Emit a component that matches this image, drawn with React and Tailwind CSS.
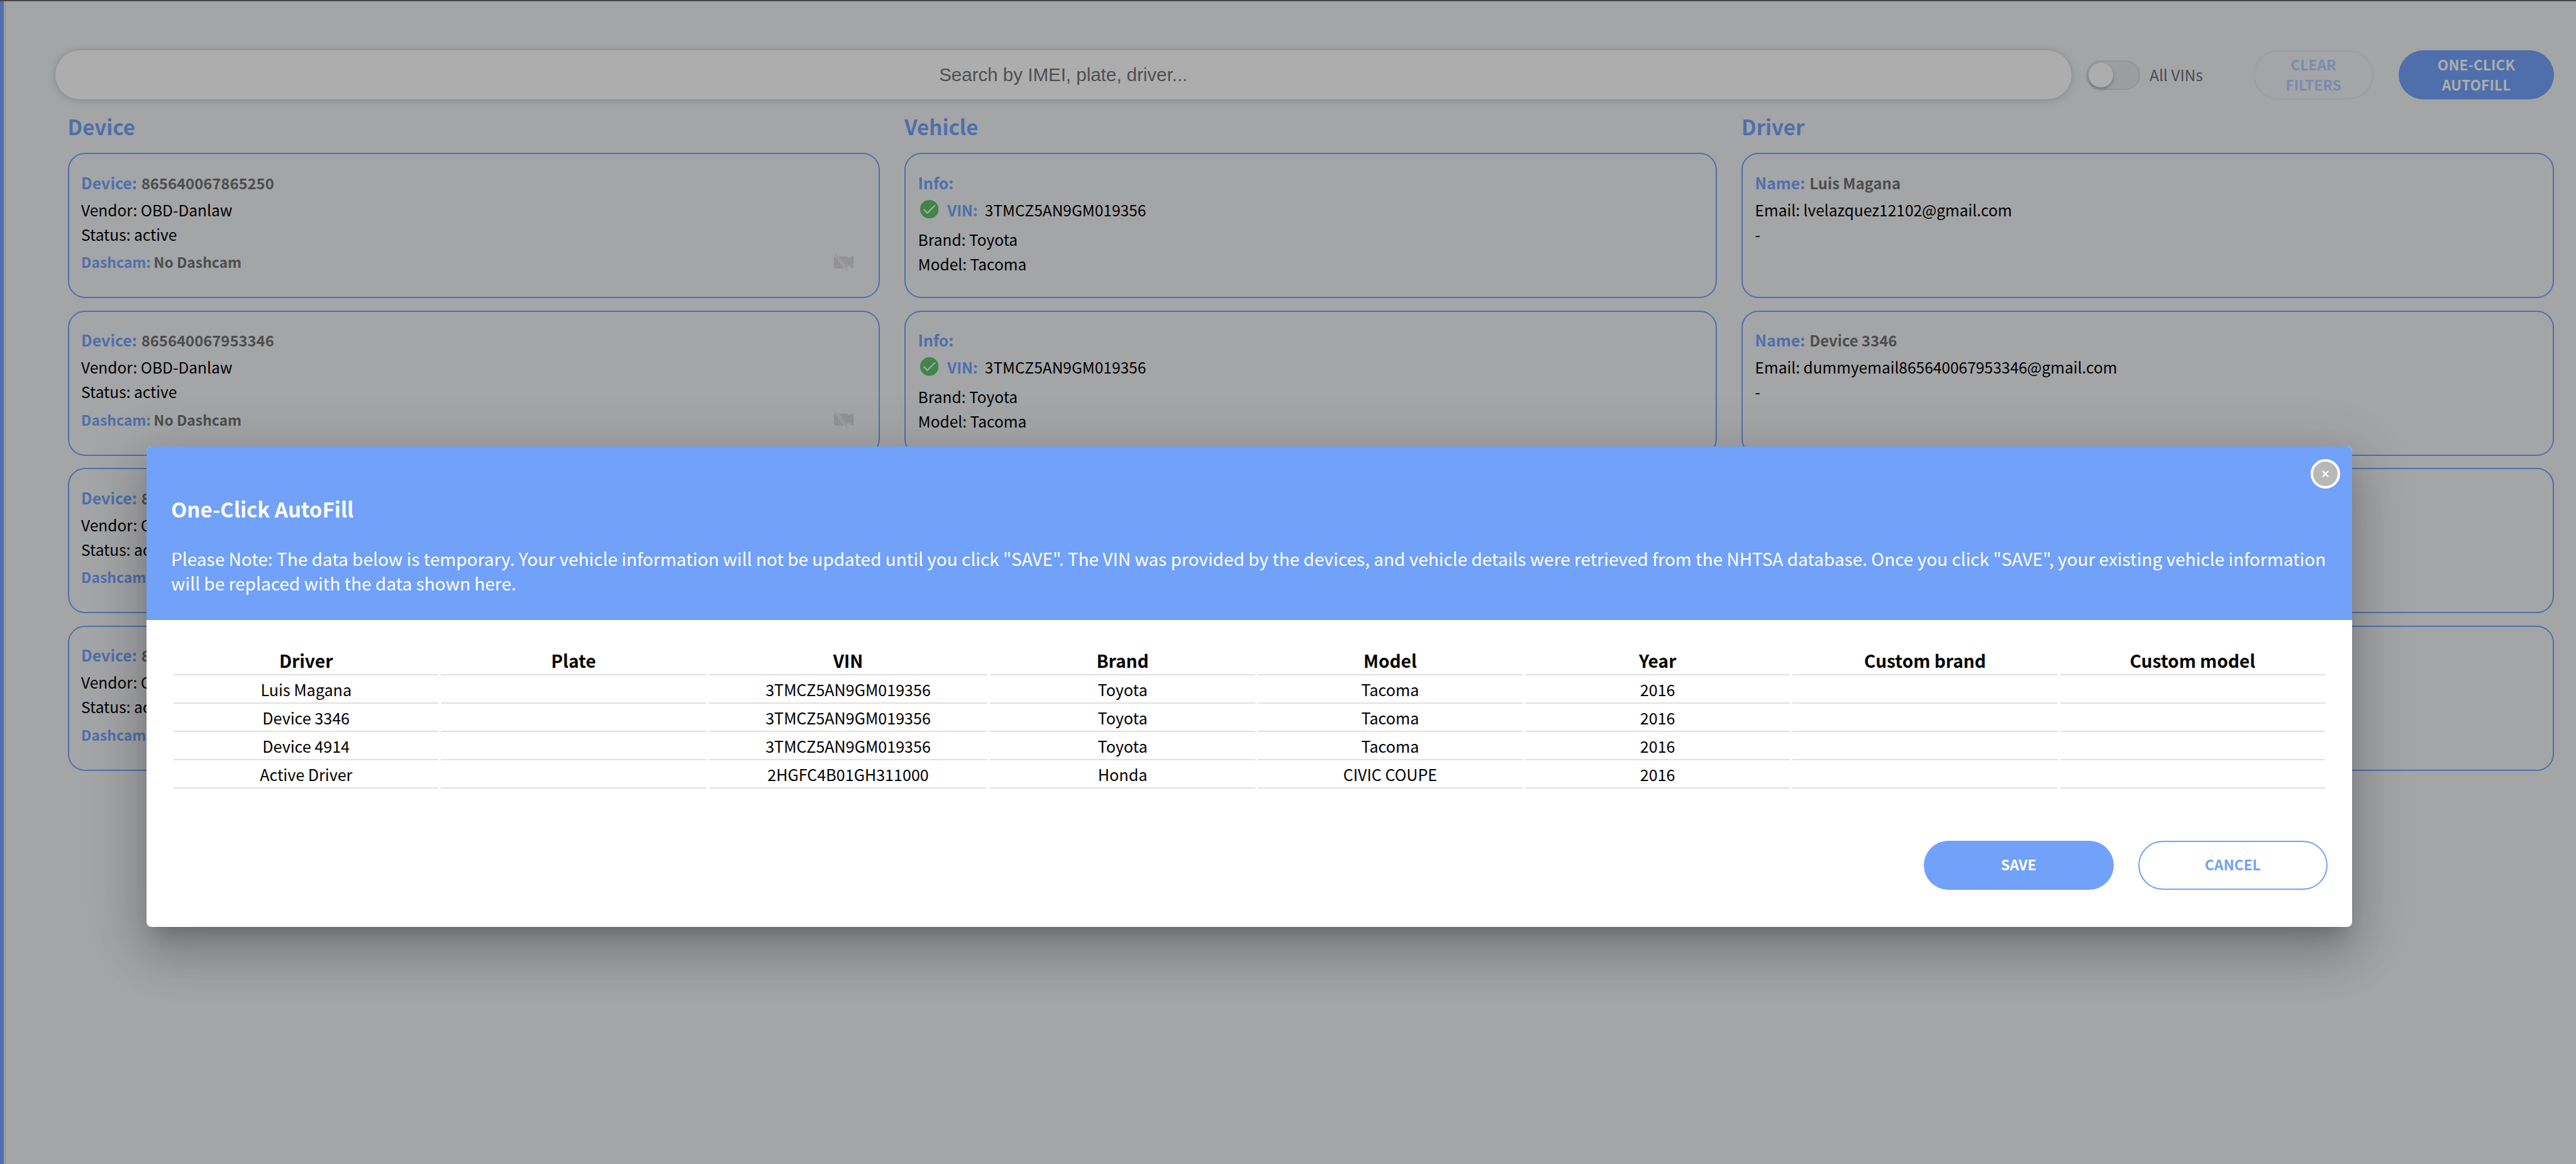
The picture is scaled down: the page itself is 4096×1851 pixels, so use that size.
import React from "react";

const devices = [
  { imei: "865640067865250", name: "Luis Magana", email: "lvelazquez12102@gmail.com" },
  { imei: "865640067953346", name: "Device 3346", email: "dummyemail865640067953346@gmail.com" },
  { imei: "865640067954914", name: "Device 4914", email: "dummyemail865640067954914@gmail.com" },
  { imei: "865640067951234", name: "Active Driver", email: "activedriver@gmail.com" },
];

const columns = ["Driver", "Plate", "VIN", "Brand", "Model", "Year", "Custom brand", "Custom model"];

const rows = [
  ["Luis Magana", "", "3TMCZ5AN9GM019356", "Toyota", "Tacoma", "2016", "", ""],
  ["Device 3346", "", "3TMCZ5AN9GM019356", "Toyota", "Tacoma", "2016", "", ""],
  ["Device 4914", "", "3TMCZ5AN9GM019356", "Toyota", "Tacoma", "2016", "", ""],
  ["Active Driver", "", "2HGFC4B01GH311000", "Honda", "CIVIC COUPE", "2016", "", ""],
];

function CameraOff() {
  return (
    <svg className="h-[28.5px] w-[32px]" viewBox="0 0 33 29" fill="none">
      <path
        d="M3 4.5H20.5c1.3 0 2.2.8 2.7 1.900l.5.9 5.700-2.500c1.500-.7 2.900-.2 2.900 1.200v17c0 1.300-1.200 1.700-2.600 1L25 20.500l-2.300-1.300-.6 2.600c-.4 1.700-1.300 2.700-3 2.700H3A3 3 0 0 1 0 21.500V7.500a3 3 0 0 1 3-3Z"
        fill="#939394"
      />
      <path d="M2.200 1 22.200 28" stroke="#a4a5a7" strokeWidth="4.600" />
      <path d="M2.200 1 22.200 28" stroke="#979798" strokeWidth="2" strokeLinecap="round" />
    </svg>
  );
}

function CheckBadge() {
  return (
    <svg className="h-[29.5px] w-[29.5px]" viewBox="0 0 30 30" fill="none">
      <circle cx="15" cy="15" r="15" fill="#418549" />
      <path d="m5.700 15.200 6 5.900L24.400 8.400" stroke="#a9aba9" strokeWidth="2.300" />
    </svg>
  );
}

function Card({ children }) {
  return (
    <div className="flex h-[231px] flex-col rounded-[27px] border-2 border-[#4e6fab] pt-[25.3px] pl-[19.5px] text-[24.5px] leading-[39.1px]">
      {children}
    </div>
  );
}

function Label({ children }) {
  return <span className="text-[24.8px] font-bold text-[#4e6fab]">{children}</span>;
}

function Value({ children }) {
  return <span className="text-[23.85px] font-bold text-[#4d4d4d]">{children}</span>;
}

function DeviceCard({ device }) {
  return (
    <Card>
      <div className="flex items-baseline gap-[7px]">
        <Label>Device:</Label>
        <Value>{device.imei}</Value>
      </div>
      <div className="mt-[4px]">Vendor: OBD-Danlaw</div>
      <div>Status: active</div>
      <div className="mt-[5.6px] flex items-center justify-between pr-[39px] text-[22.9px] font-bold">
        <div className="flex gap-[4.5px]">
          <span className="text-[#4e6fab]">Dashcam:</span>
          <span className="text-[#4d4d4d]">No Dashcam</span>
        </div>
        <div className="flex">
          <CameraOff />
        </div>
      </div>
    </Card>
  );
}

function VehicleCard() {
  return (
    <Card>
      <Label>Info:</Label>
      <div className="mt-[4px] flex">
        <div className="flex w-[46.5px] items-center pb-[1px] pl-[3px]">
          <CheckBadge />
        </div>
        <span className="w-[59.5px] text-[24px] font-bold text-[#4e6fab]">VIN:</span>
        <span>3TMCZ5AN9GM019356</span>
      </div>
      <div className="mt-[8px]">Brand: Toyota</div>
      <div>Model: Tacoma</div>
    </Card>
  );
}

function DriverCard({ device }) {
  return (
    <Card>
      <div className="flex items-baseline gap-[7px]">
        <Label>Name:</Label>
        <Value>{device.name}</Value>
      </div>
      <div className="mt-[4px]">Email: {device.email}</div>
      <div>-</div>
    </Card>
  );
}

function Column({ title, children }) {
  return (
    <div className="flex flex-col">
      <h2 className="mb-[18.5px] pt-[1px] text-[33px] leading-[48px] font-bold text-[#4e6fab]">{title}</h2>
      <div className="flex flex-col gap-[19.5px]">{children}</div>
    </div>
  );
}

function Toolbar() {
  return (
    <div className="ml-[78px] flex h-[78.3px] items-center">
      <div className="flex h-full w-[3205.5px] items-center justify-center rounded-full bg-[#adadad] font-['Liberation_Sans',sans-serif] text-[29.5px] text-[#4f4f4f] shadow-[0_2px_16px_rgba(0,0,0,0.13),0_0_6px_rgba(0,0,0,0.1)]">
        Search by IMEI, plate, driver...
      </div>
      <div className="ml-[23.5px] flex h-[47px] w-[86px] items-center rounded-full border-2 border-[#949597] bg-[#9c9d9f] pl-[2px]">
        <div className="size-[39px] rounded-full bg-[#adadad] shadow-[0_3px_5px_rgba(0,0,0,0.25)]" />
      </div>
      <div className="ml-[15px] w-[165px] text-[24.5px] text-[#4a4b55]">All VINs</div>
      <div className="flex h-full w-[191px] items-center justify-center rounded-full border-2 border-[#9d9ea0] text-center text-[22.8px] leading-[32.3px] font-bold text-[#7b8bb0]">
        CLEAR
        <br />
        FILTERS
      </div>
      <div className="ml-[40px] flex h-full w-[247px] items-center justify-center rounded-full bg-[#4e6fab] text-center text-[22.8px] leading-[32.3px] font-bold text-[#adadad]">
        ONE-CLICK
        <br />
        AUTOFILL
      </div>
    </div>
  );
}

function Modal() {
  return (
    <div className="absolute top-[708px] left-[233px] flex h-[763.5px] w-[3507px] flex-col overflow-visible rounded-[8px] bg-white shadow-[0_22px_30px_-14px_rgba(0,0,0,0.2),0_47px_74px_6px_rgba(0,0,0,0.14),0_18px_90px_16px_rgba(0,0,0,0.12)]">
      <div className="h-[276px] rounded-t-[8px] bg-[#71a1f8] px-[39px] pt-[74.5px] text-white">
        <h1 className="text-[32.9px] leading-[48px] font-bold">One-Click AutoFill</h1>
        <p className="mt-[35px] text-[28.03px] leading-[39.1px] whitespace-nowrap">
          Please Note: The data below is temporary. Your vehicle information will not be updated until you click "SAVE".
          The VIN was provided by the devices, and vehicle details were retrieved from the NHTSA database. Once you
          click "SAVE", your existing vehicle information
          <br />
          will be replaced with the data shown here.
        </p>
        <button className="absolute top-[19.5px] right-[19.5px] flex size-[47px] items-center justify-center rounded-full border-4 border-white bg-[#b8b8b8]">
          <svg className="size-[11px]" viewBox="0 0 11 11" stroke="#fff" strokeWidth="2.300" strokeLinecap="round">
            <path d="m1.500 1.500 8 8m0-8-8 8" />
          </svg>
        </button>
      </div>

      <div className="mx-[43px] grid grid-cols-[431fr_431fr_454fr_431fr_431fr_431fr_431fr_431fr] gap-x-[3.9px] pt-[38px] text-center">
        {columns.map((c) => (
          <div key={c} className="h-[50px] border-b-2 border-[#e0e0e0] pt-[3px] text-[28.1px] leading-[45px] font-bold">
            {c}
          </div>
        ))}
        {rows.map((r, i) =>
          r.map((cell, j) => (
            <div key={i + "-" + j} className="h-[45px] border-b-2 border-[#e0e0e0] pt-[2px] text-[25.1px] leading-[41px]">
              {cell}
            </div>
          ))
        )}
      </div>

      <div className="mt-[82.5px] mr-[39px] flex justify-end gap-[39px] text-[22.8px] font-bold">
        <button className="h-[78.5px] w-[301.5px] rounded-full bg-[#71a1f8] pb-[1px] text-white">SAVE</button>
        <button className="h-[78.5px] w-[301.5px] rounded-full border-2 border-[#71a1f8] pb-[1px] text-[#71a1f8]">
          CANCEL
        </button>
      </div>
    </div>
  );
}

export default function App() {
  return (
    <div className="relative flex h-[1851px] w-[4096px] flex-col overflow-hidden border-t-2 border-[#444448] bg-[#a4a5a7] font-['Noto_Sans_CJK_JP','Noto_Sans',sans-serif] text-black">
      <div className="flex flex-1">
        <div className="w-[10px] border-l-6 border-[#4e6fab] bg-[#9b9a9d]" />
        <div className="flex flex-1 flex-col pt-[78px]">
          <Toolbar />
          <div className="mt-[17.5px] ml-[97.6px] grid w-[3953.2px] grid-cols-3 gap-[39.1px]">
            <Column title="Device">
              {devices.map((d) => (
                <DeviceCard key={d.imei} device={d} />
              ))}
            </Column>
            <Column title="Vehicle">
              {devices.map((d) => (
                <VehicleCard key={d.imei} />
              ))}
            </Column>
            <Column title="Driver">
              {devices.map((d) => (
                <DriverCard key={d.imei} device={d} />
              ))}
            </Column>
          </div>
        </div>
      </div>
      <Modal />
    </div>
  );
}
